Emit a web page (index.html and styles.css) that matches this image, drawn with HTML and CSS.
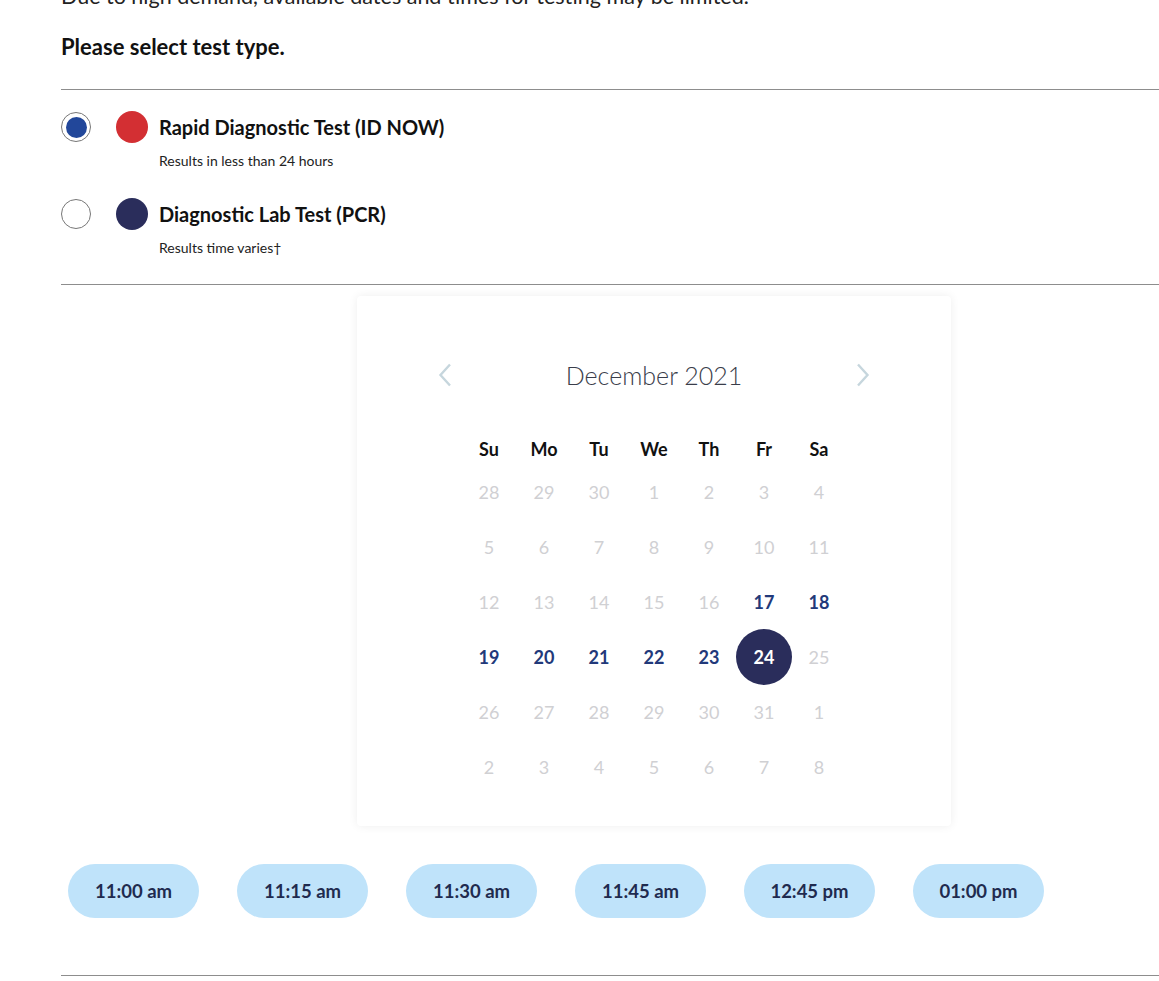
FILE: index.html
```html
<!DOCTYPE html>
<html lang="en">
<head>
<meta charset="utf-8">
<title>Select test type</title>
<link rel="stylesheet" href="styles.css">
</head>
<body>
<main class="page">
  <p class="intro">Due to high demand, available dates and times for testing may be limited.</p>
  <h2 class="prompt">Please select test type.</h2>
  <hr class="rule">
  <div class="options">
    <label class="option">
      <span class="radio checked"><span class="radio-dot"></span></span>
      <span class="swatch red"></span>
      <span class="option-text">
        <span class="option-title">Rapid Diagnostic Test (ID NOW)</span>
        <span class="option-sub">Results in less than 24 hours</span>
      </span>
    </label>
    <label class="option">
      <span class="radio"></span>
      <span class="swatch navy"></span>
      <span class="option-text">
        <span class="option-title">Diagnostic Lab Test (PCR)</span>
        <span class="option-sub">Results time varies†</span>
      </span>
    </label>
  </div>
  <hr class="rule">
  <section class="calendar">
    <div class="cal-head">
      <button class="nav" aria-label="Previous month">
        <svg width="14" height="24" viewBox="0 0 14 24"><path d="M12 1.5 L2.5 12 L12 22.5" fill="none" stroke="#c6d6dd" stroke-width="2.4"/></svg>
      </button>
      <div class="month">December 2021</div>
      <button class="nav" aria-label="Next month">
        <svg width="14" height="24" viewBox="0 0 14 24"><path d="M2 1.5 L11.5 12 L2 22.5" fill="none" stroke="#c6d6dd" stroke-width="2.4"/></svg>
      </button>
    </div>
    <div class="grid">
      <div class="dow">Su</div><div class="dow">Mo</div><div class="dow">Tu</div><div class="dow">We</div><div class="dow">Th</div><div class="dow">Fr</div><div class="dow">Sa</div>
      <div class="day off">28</div><div class="day off">29</div><div class="day off">30</div><div class="day off">1</div><div class="day off">2</div><div class="day off">3</div><div class="day off">4</div>
      <div class="day off">5</div><div class="day off">6</div><div class="day off">7</div><div class="day off">8</div><div class="day off">9</div><div class="day off">10</div><div class="day off">11</div>
      <div class="day off">12</div><div class="day off">13</div><div class="day off">14</div><div class="day off">15</div><div class="day off">16</div><div class="day on">17</div><div class="day on">18</div>
      <div class="day on">19</div><div class="day on">20</div><div class="day on">21</div><div class="day on">22</div><div class="day on">23</div><div class="day selected"><span>24</span></div><div class="day off">25</div>
      <div class="day off">26</div><div class="day off">27</div><div class="day off">28</div><div class="day off">29</div><div class="day off">30</div><div class="day off">31</div><div class="day off">1</div>
      <div class="day off">2</div><div class="day off">3</div><div class="day off">4</div><div class="day off">5</div><div class="day off">6</div><div class="day off">7</div><div class="day off">8</div>
    </div>
  </section>
  <div class="slots">
    <button class="slot">11:00 am</button>
    <button class="slot">11:15 am</button>
    <button class="slot">11:30 am</button>
    <button class="slot">11:45 am</button>
    <button class="slot">12:45 pm</button>
    <button class="slot">01:00 pm</button>
  </div>
  <hr class="rule bottom">
</main>
</body>
</html>
```
FILE: styles.css
```css
* { box-sizing: border-box; }
html, body { margin: 0; padding: 0; background: #fff; }
body {
  font-family: Lato, "Source Sans Pro", "Liberation Sans", sans-serif;
  color: #111;
  overflow: hidden;
}
.page {
  padding-left: 61px;
  width: 1247px;
}
.intro {
  margin: -16px 0 0 0;
  font-size: 21.5px;
  line-height: 24px;
  color: #222;
}
.prompt {
  margin: 26px 0 0 0;
  font-size: 22px;
  line-height: 26px;
  font-weight: 700;
  color: #111;
}
.rule {
  margin: 0;
  border: 0;
  border-top: 1px solid #8d8d8d;
  height: 0;
}
.prompt + .rule { margin-top: 29px; }
.options {
  display: flex;
  flex-direction: column;
  gap: 30px;
  padding: 22px 0 28px 0;
}
.option {
  display: flex;
  align-items: flex-start;
}
.radio {
  width: 30px;
  height: 30px;
  border-radius: 50%;
  border: 1px solid #777;
  background: #fff;
  display: flex;
  align-items: center;
  justify-content: center;
  flex: none;
}
.radio-dot {
  width: 21px;
  height: 21px;
  border-radius: 50%;
  background: #22479a;
}
.swatch {
  width: 32px;
  height: 32px;
  border-radius: 50%;
  margin: -1px 0 0 25px;
  flex: none;
}
.swatch.red { background: #d32f33; }
.swatch.navy { background: #2a2d5b; }
.option-text {
  display: flex;
  flex-direction: column;
  margin-left: 11px;
}
.option-title {
  font-size: 20px;
  line-height: 26px;
  font-weight: 700;
  color: #111;
  margin-top: 2px;
}
.option-sub {
  font-size: 14px;
  line-height: 17px;
  color: #222;
  margin-top: 12px;
}
.calendar {
  width: 594px;
  height: 530px;
  margin: 11px 0 0 296px;
  background: #fff;
  border-radius: 4px;
  box-shadow: 0 0 10px rgba(0,0,0,0.07);
  padding-top: 62px;
}
.cal-head {
  display: flex;
  align-items: center;
  justify-content: space-between;
  width: 432px;
  margin: 0 auto;
}
.nav {
  border: 0;
  background: none;
  padding: 0;
  width: 14px;
  height: 24px;
  display: flex;
}
.month {
  font-size: 25px;
  font-weight: 300;
  color: #3a3d4a;
  line-height: 34px;
}
.grid {
  display: grid;
  grid-template-columns: repeat(7, 55px);
  grid-template-rows: 31px;
  grid-auto-rows: 55px;
  width: 385px;
  margin: 41px auto 0;
}
.dow, .day {
  display: flex;
  align-items: center;
  justify-content: center;
  font-size: 18px;
  font-weight: 700;
}
.dow { color: #111; }
.day.off { color: #d0d0d3; font-weight: 400; }
.day.on { color: #22397a; }
.day.selected span {
  width: 56px;
  height: 56px;
  border-radius: 50%;
  background: #2a2d5b;
  color: #fff;
  display: flex;
  align-items: center;
  justify-content: center;
  flex: none;
}
.slots {
  display: flex;
  gap: 38px;
  padding: 38px 0 0 7px;
}
.slot {
  width: 131px;
  height: 54px;
  border: 0;
  border-radius: 27px;
  background: #bfe3fa;
  color: #1f2b4f;
  font-family: inherit;
  font-size: 18.5px;
  font-weight: 700;
}
.rule.bottom { margin-top: 57px; }
```
